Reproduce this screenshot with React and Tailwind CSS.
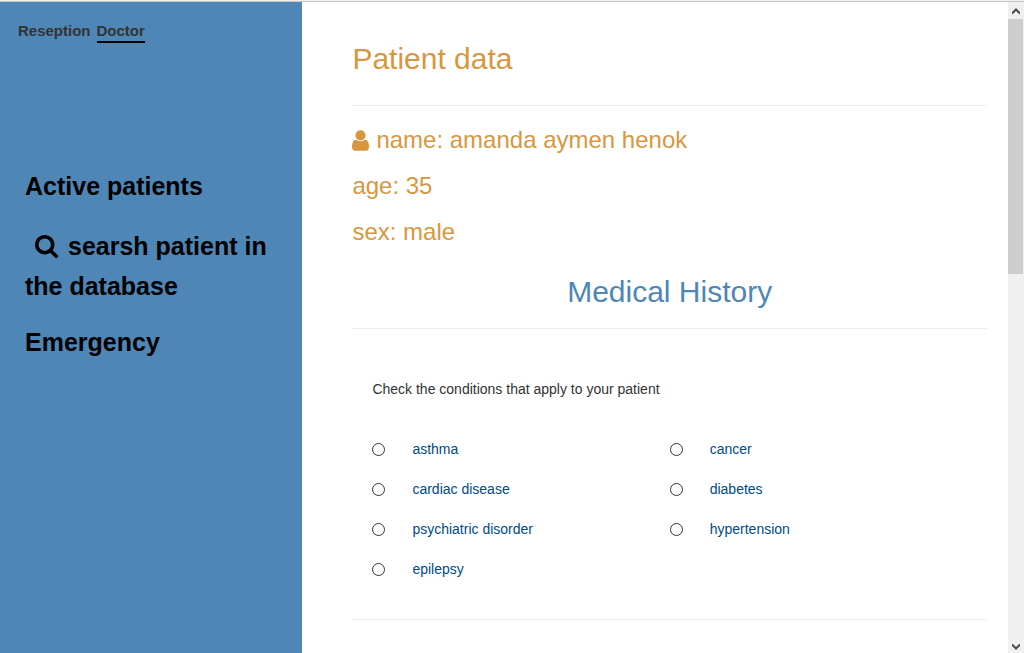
const leftConditions = ["asthma", "cardiac disease", "psychiatric disorder", "epilepsy"];
const rightConditions = ["cancer", "diabetes", "hypertension"];

function SearchIcon({ className }) {
  return (
    <svg viewBox="64 128 1664 1664" fill="currentColor" aria-hidden="true" className={className}>
      <path d="M1216 832q0-185-131.5-316.5t-316.5-131.5-316.5 131.5-131.5 316.5 131.5 316.5 316.5 131.5 316.5-131.5 131.5-316.5zm512 832q0 52-38 90t-90 38q-54 0-90-38l-343-342q-179 124-399 124-143 0-273.5-55.5t-225-150-150-225-55.5-273.5 55.5-273.5 150-225 225-150 273.5-55.5 273.5 55.5 225 150 150 225 55.5 273.5q0 220-124 399l343 343q37 37 37 90z" />
    </svg>
  );
}

function UserIcon({ className }) {
  return (
    <svg viewBox="256 128 1280 1536" fill="currentColor" aria-hidden="true" className={className}>
      <path d="M1536 1399q0 109-62.5 187t-150.5 78h-854q-88 0-150.5-78t-62.5-187q0-85 8.5-160.5t31.5-152 58.5-131 94-89 134.5-34.5q131 128 313 128t313-128q76 0 134.5 34.5t94 89 58.5 131 31.5 152 8.5 160.5zm-256-887q0 159-112.5 271.5t-271.5 112.5-271.5-112.5-112.5-271.5 112.5-271.5 271.5-112.5 271.5 112.5 112.5 271.5z" />
    </svg>
  );
}

function Sidebar() {
  return (
    <aside className="w-[30%] shrink-0 bg-[#4e86b5] pt-[18px]">
      <nav className="flex items-start gap-1.5 pl-[18px] text-[15px] leading-[21px] font-bold text-[#333333]">
        <a href="#reception">Reseption</a>
        <a href="#doctor" aria-current="page" className="border-b-2 border-black">
          Doctor
        </a>
      </nav>
      <nav className="mt-[123px] flex flex-col gap-4 pr-4 pl-[25px] text-[25px] leading-10 font-bold text-black">
        <a href="#active">Active patients</a>
        <a href="#search" className="pt-1">
          <SearchIcon className="mr-2.5 ml-2.5 inline-block size-[23px] align-[-3px]" />
          searsh patient in the database
        </a>
        <a href="#emergency">Emergency</a>
      </nav>
    </aside>
  );
}

function Condition({ name }) {
  return (
    <label className="flex h-10 items-center gap-[27px] text-[#004a87]">
      <input
        type="radio"
        name={name}
        className="size-[13px] shrink-0 appearance-none rounded-full border border-[#333333] bg-white checked:border-4"
      />
      {name}
    </label>
  );
}

function ScrollRail() {
  return (
    <div aria-hidden="true" className="flex w-4 shrink-0 flex-col bg-[#f0f0f0]">
      <div className="flex h-[17px] items-center justify-center">
        <svg viewBox="0 0 8 6" className="h-1.5 w-2" fill="#505050">
          <path d="M4 0L8 4V6H7L4 3L1 6H0V4Z" />
        </svg>
      </div>
      <div className="mr-px h-[255px] bg-[#cdcdcd]" />
      <div className="mt-auto flex h-[17px] items-center justify-center pt-1">
        <svg viewBox="0 0 8 6" className="h-1.5 w-2" fill="#505050">
          <path d="M4 6L8 2V0H7L4 3L1 0H0V2Z" />
        </svg>
      </div>
    </div>
  );
}

export default function App() {
  return (
    <div className="flex min-h-screen flex-col bg-white font-['Liberation_Sans',Arial,sans-serif]">
      <div className="h-0.5 border-b border-[#c8c8c8] bg-[#f0f0f0]" />
      <div className="flex grow">
        <div className="flex min-w-0 grow">
          <Sidebar />
          <main className="min-w-0 grow pt-10 pr-[21px] pb-8 pl-[50px] text-sm text-[#333333]">
            <h2 className="text-[30px] leading-[33px] text-[#d8973f]">Patient data</h2>
            <hr className="mt-[30px] border-[#eeeeee]" />
            <div className="mt-[21px] flex flex-col gap-5 text-2xl leading-[26px] text-[#d8973f]">
              <h3 className="flex items-center gap-[7px]">
                <UserIcon className="h-[21px] w-[17px]" />
                name: amanda aymen henok
              </h3>
              <h3>age: 35</h3>
              <h3>sex: male</h3>
            </div>
            <h2 className="mt-[30px] text-center text-[30px] leading-[33px] text-[#4e86b5]">Medical History</h2>
            <hr className="mt-5 border-[#eeeeee]" />
            <form className="px-5 pt-[50px] pb-[30px]">
              <fieldset>
                <legend className="leading-5">Check the conditions that apply to your patient</legend>
                <div className="mt-[30px] grid grid-cols-2">
                  <div>
                    {leftConditions.map((name) => (
                      <Condition key={name} name={name} />
                    ))}
                  </div>
                  <div>
                    {rightConditions.map((name) => (
                      <Condition key={name} name={name} />
                    ))}
                  </div>
                </div>
              </fieldset>
            </form>
            <hr className="border-[#eeeeee]" />
          </main>
        </div>
        <ScrollRail />
      </div>
    </div>
  );
}
